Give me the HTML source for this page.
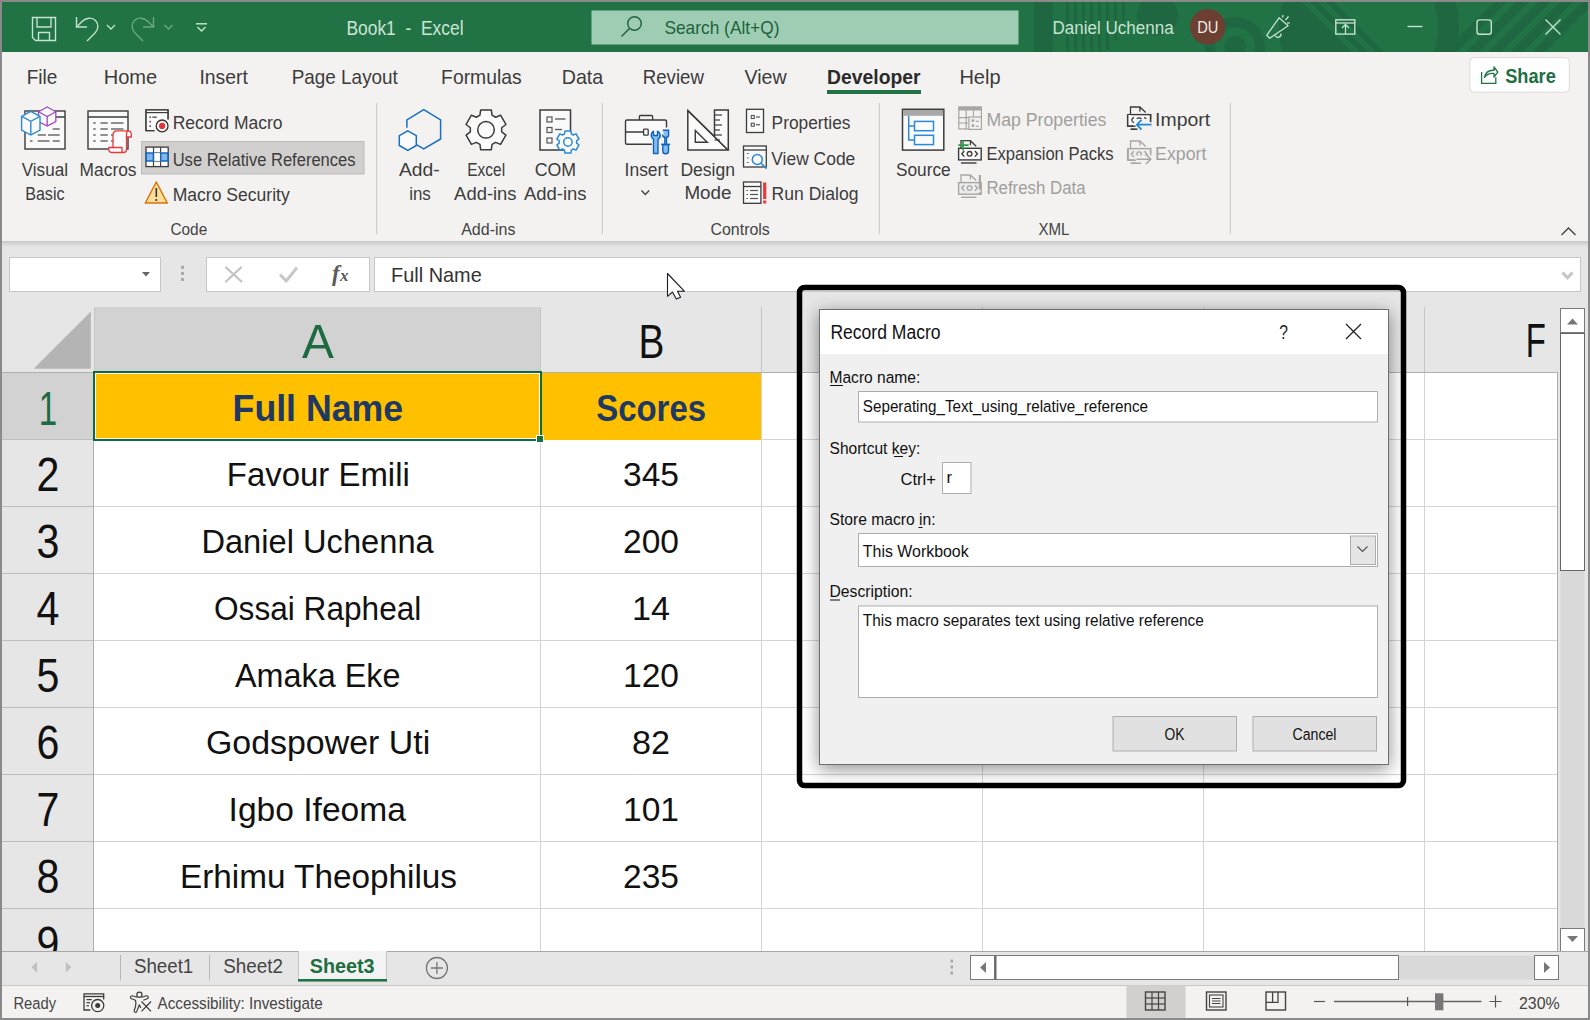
<!DOCTYPE html>
<html><head><meta charset="utf-8"><title>Excel</title>
<style>
html,body{margin:0;padding:0;width:1590px;height:1020px;overflow:hidden;background:#8a8a8a}
svg{position:absolute;left:0;top:0;display:block}
text{font-family:"Liberation Sans", sans-serif;white-space:pre}
</style></head><body>
<svg width="1590" height="1020" viewBox="0 0 1590 1020">
<defs>
<linearGradient id="ribsh" x1="0" y1="0" x2="0" y2="1"><stop offset="0" stop-color="#c8c8c8"/><stop offset="1" stop-color="#e6e6e6"/></linearGradient>
<filter id="dshadow" x="-10%" y="-10%" width="120%" height="125%"><feGaussianBlur in="SourceAlpha" stdDeviation="9"/><feOffset dx="0" dy="4"/><feComponentTransfer><feFuncA type="linear" slope="0.45"/></feComponentTransfer><feMerge><feMergeNode/><feMergeNode in="SourceGraphic"/></feMerge></filter>
<clipPath id="clipbox"><rect x="802" y="290" width="599" height="493"/></clipPath>
</defs>
<rect x="0" y="0" width="1590" height="1020" fill="#8a8a8a" /><rect x="2" y="2" width="1586" height="50.3" fill="#217346" /><clipPath id="tclip"><rect x="2" y="2" width="1586" height="50.3"/></clipPath><clipPath id="stripclip"><rect x="1300" y="2" width="200" height="51"/></clipPath><g clip-path="url(#tclip)" fill="#1f6740"><rect x="1034" y="2" width="18.7" height="51" fill="#1f6740" /><rect x="1066" y="2" width="3" height="51" fill="#1f6740" /><rect x="1074" y="2" width="3" height="51" fill="#1f6740" /><rect x="1082" y="2" width="3" height="51" fill="#1f6740" /><rect x="1090" y="2" width="3" height="51" fill="#1f6740" /><rect x="1098" y="2" width="3" height="51" fill="#1f6740" /><rect x="1106" y="2" width="3" height="47" fill="#1f6740" /><rect x="1114" y="2" width="3" height="38" fill="#1f6740" /><rect x="1122" y="2" width="3" height="19" fill="#1f6740" /><circle cx="1157.3" cy="15" r="20.6"/><circle cx="1235" cy="47" r="25" fill="none" stroke="#1f6740" stroke-width="10"/><circle cx="1235" cy="47" r="10.8"/><circle cx="1369" cy="27" r="79.5" fill="none" stroke="#1f6740" stroke-width="21"/><path d="M1290 2 L1334 2 L1385 53 L1290 53 Z"/><g clip-path="url(#stripclip)" fill="#217346"><path d="M1302 2 L1310 2 L1361 53 L1353 53 Z"/><path d="M1318 2 L1326 2 L1377 53 L1369 53 Z"/></g><path d="M1494 2 L1507 2 L1456 53 L1443 53 Z"/><path d="M1516 2 L1529 2 L1478 53 L1465 53 Z"/><path d="M1538 2 L1551 2 L1500 53 L1487 53 Z"/><path d="M1560 2 L1573 2 L1522 53 L1509 53 Z"/><path d="M1582 2 L1595 2 L1544 53 L1531 53 Z"/></g><path d="M32.5 17.5 H55.5 V40.5 H35.5 L32.5 37.5 Z" fill="none" stroke="#c3e2cf" stroke-width="1.4" /><path d="M37 17.5 V27 H51 V17.5" fill="none" stroke="#c3e2cf" stroke-width="1.4" /><path d="M38.5 40.5 V32.5 H49.5 V40.5" fill="none" stroke="#c3e2cf" stroke-width="1.4" /><path d="M76.5 17 V27 H87" fill="none" stroke="#c3e2cf" stroke-width="1.4" /><path d="M77 26.5 L82 21.5 C86 17.5 92 17 95.5 20.5 C99 24 98.5 29.5 95 33 L87 41" fill="none" stroke="#c3e2cf" stroke-width="1.4" /><path d="M107 25 L111 29 L115 25" fill="none" stroke="#c3e2cf" stroke-width="1.3" /><path d="M153.5 17 V27 H143" fill="none" stroke="#6aaa84" stroke-width="1.4" /><path d="M153 26.5 L148 21.5 C144 17.5 138 17 134.5 20.5 C131 24 131.5 29.5 135 33 L143 41" fill="none" stroke="#6aaa84" stroke-width="1.4" /><path d="M164.5 25 L168.5 29 L172.5 25" fill="none" stroke="#6aaa84" stroke-width="1.3" /><line x1="196" y1="23.8" x2="207" y2="23.8" stroke="#c3e2cf" stroke-width="1.5" /><path d="M197.5 27 L201.5 31 L205.5 27" fill="none" stroke="#c3e2cf" stroke-width="1.5" /><text x="346.4" y="34.7" font-size="20.3" fill="#cde4d6" font-weight="normal" textLength="117.2" lengthAdjust="spacingAndGlyphs">Book1  -  Excel</text><rect x="591.5" y="10.5" width="427" height="34" fill="#9fcdb3" /><circle cx="634.5" cy="23.5" r="6.8" fill="none" stroke="#23663f" stroke-width="1.5"/><line x1="629.5" y1="28.5" x2="621.5" y2="36.5" stroke="#23663f" stroke-width="1.6" /><text x="664.4" y="34.2" font-size="19.0" fill="#21633d" font-weight="normal" textLength="115.1" lengthAdjust="spacingAndGlyphs">Search (Alt+Q)</text><text x="1052.5" y="33.7" font-size="18.3" fill="#c8e2d2" font-weight="normal" textLength="121.1" lengthAdjust="spacingAndGlyphs">Daniel Uchenna</text><circle cx="1207.7" cy="26.8" r="17.8" fill="#6b4033"/><text x="1197.2" y="32.6" font-size="15.6" fill="#f3ebe6" font-weight="normal" textLength="21.2" lengthAdjust="spacingAndGlyphs">DU</text><path d="M1266.8 35.2 L1279.1 17.8 L1288.1 25.7 L1269.7 38.2 Z" fill="none" stroke="#c3e2cf" stroke-width="1.3" stroke-linejoin="round"/><path d="M1275 35.5 A3.2 3.2 0 0 0 1281 33.5" fill="none" stroke="#c3e2cf" stroke-width="1.3" /><line x1="1282.5" y1="17.5" x2="1283" y2="15" stroke="#c3e2cf" stroke-width="1.3" /><line x1="1285.5" y1="20" x2="1288.5" y2="16.5" stroke="#c3e2cf" stroke-width="1.3" /><line x1="1287" y1="23" x2="1289.8" y2="23" stroke="#c3e2cf" stroke-width="1.3" /><rect x="1335.8" y="19.8" width="19" height="14.3" fill="none" stroke="#c3e2cf" stroke-width="1.4" /><line x1="1336" y1="23" x2="1355" y2="23" stroke="#c3e2cf" stroke-width="1.3" /><path d="M1342 28 L1345.5 24.5 L1349 28 M1345.5 25 V34" fill="none" stroke="#c3e2cf" stroke-width="1.3" /><line x1="1407.5" y1="26.5" x2="1422.5" y2="26.5" stroke="#c3e2cf" stroke-width="1.4" /><rect x="1477" y="19.9" width="14.3" height="14.3" fill="none" stroke="#c3e2cf" stroke-width="1.4" rx="2.5" /><path d="M1545.5 19.5 L1560.5 34.5 M1560.5 19.5 L1545.5 34.5" fill="none" stroke="#c3e2cf" stroke-width="1.4" /><rect x="2" y="52" width="1586" height="190" fill="#f3f2f1" /><rect x="2" y="242" width="1586" height="709" fill="#e6e6e6" /><rect x="2" y="241" width="1586" height="6" fill="url(#ribsh)" /><text x="26.7" y="84.0" font-size="20.3" fill="#3c3c3c" font-weight="normal" textLength="30.6" lengthAdjust="spacingAndGlyphs">File</text><text x="103.7" y="84.0" font-size="20.3" fill="#3c3c3c" font-weight="normal" textLength="53.6" lengthAdjust="spacingAndGlyphs">Home</text><text x="199.4" y="84.0" font-size="20.3" fill="#3c3c3c" font-weight="normal" textLength="48.5" lengthAdjust="spacingAndGlyphs">Insert</text><text x="291.7" y="84.0" font-size="20.3" fill="#3c3c3c" font-weight="normal" textLength="106.2" lengthAdjust="spacingAndGlyphs">Page Layout</text><text x="441.1" y="84.0" font-size="20.3" fill="#3c3c3c" font-weight="normal" textLength="80.5" lengthAdjust="spacingAndGlyphs">Formulas</text><text x="561.7" y="84.0" font-size="20.3" fill="#3c3c3c" font-weight="normal" textLength="41.6" lengthAdjust="spacingAndGlyphs">Data</text><text x="642.7" y="84.0" font-size="20.3" fill="#3c3c3c" font-weight="normal" textLength="61.2" lengthAdjust="spacingAndGlyphs">Review</text><text x="744.4" y="84.0" font-size="20.3" fill="#3c3c3c" font-weight="normal" textLength="42.2" lengthAdjust="spacingAndGlyphs">View</text><text x="959.4" y="84.0" font-size="20.3" fill="#3c3c3c" font-weight="normal" textLength="41.2" lengthAdjust="spacingAndGlyphs">Help</text><text x="827.1" y="84.0" font-size="20.3" fill="#2b2b2b" font-weight="bold" textLength="93.5" lengthAdjust="spacingAndGlyphs">Developer</text><rect x="827" y="90" width="94" height="4" fill="#217346" /><rect x="1469.8" y="57.6" width="99.5" height="34.6" fill="#ffffff" stroke="#dcdad8" stroke-width="1" rx="4" /><text x="1505.2" y="82.8" font-size="21.1" fill="#1e6e42" font-weight="bold" textLength="50.6" lengthAdjust="spacingAndGlyphs">Share</text><path d="M1481.6 72 V83.3 H1495.8 V77.3" fill="none" stroke="#217346" stroke-width="1.3" /><path d="M1484.5 77.5 C1485.5 72 1489 70 1494 70.3 V67 L1497.8 72 L1494 77 V73.5 C1489.5 73 1486.5 74.5 1484.5 77.5 Z" fill="none" stroke="#217346" stroke-width="1.3" stroke-linejoin="round"/><line x1="376.7" y1="103" x2="376.7" y2="234" stroke="#c8c6c4" stroke-width="1" /><line x1="602.3" y1="103" x2="602.3" y2="234" stroke="#c8c6c4" stroke-width="1" /><line x1="879.3" y1="103" x2="879.3" y2="234" stroke="#c8c6c4" stroke-width="1" /><line x1="1230.3" y1="103" x2="1230.3" y2="234" stroke="#c8c6c4" stroke-width="1" /><text x="170.5" y="234.5" font-size="17.2" fill="#444" font-weight="normal" textLength="36.7" lengthAdjust="spacingAndGlyphs">Code</text><text x="461.2" y="234.5" font-size="17.2" fill="#444" font-weight="normal" textLength="54.3" lengthAdjust="spacingAndGlyphs">Add-ins</text><text x="710.5" y="234.5" font-size="17.2" fill="#444" font-weight="normal" textLength="59.3" lengthAdjust="spacingAndGlyphs">Controls</text><text x="1038.5" y="234.5" font-size="17.2" fill="#444" font-weight="normal" textLength="31.0" lengthAdjust="spacingAndGlyphs">XML</text><path d="M1561.5 235 L1568.5 228 L1575.5 235" fill="none" stroke="#444" stroke-width="1.4" /><text x="21.7" y="176.0" font-size="18.7" fill="#3c3c3c" font-weight="normal" textLength="46.3" lengthAdjust="spacingAndGlyphs">Visual</text><text x="25.2" y="199.7" font-size="18.7" fill="#3c3c3c" font-weight="normal" textLength="39.3" lengthAdjust="spacingAndGlyphs">Basic</text><text x="79.6" y="176.0" font-size="18.7" fill="#3c3c3c" font-weight="normal" textLength="56.9" lengthAdjust="spacingAndGlyphs">Macros</text><rect x="25" y="111" width="40" height="38" fill="#fafafa" stroke="#3b3b3b" stroke-width="1.4" /><line x1="25" y1="117" x2="65" y2="117" stroke="#3b3b3b" stroke-width="1.4" /><line x1="52.7" y1="129" x2="59.7" y2="129" stroke="#555" stroke-width="1.3" /><line x1="37.7" y1="135" x2="45.9" y2="135" stroke="#555" stroke-width="1.3" /><line x1="48" y1="135" x2="59.7" y2="135" stroke="#555" stroke-width="1.3" /><line x1="30" y1="141" x2="32.5" y2="141" stroke="#555" stroke-width="1.3" /><line x1="37.7" y1="141" x2="49.5" y2="141" stroke="#555" stroke-width="1.3" /><line x1="52.7" y1="141" x2="59.7" y2="141" stroke="#555" stroke-width="1.3" /><path d="M47.2 107 L55.8 111.8 V121.5 L47.2 126 L38.5 121.5 V111.8 Z" fill="#fafafa" stroke="#a546c4" stroke-width="1.3" /><path d="M38.5 111.8 L47.2 116.5 L55.8 111.8 M47.2 116.5 V126" fill="none" stroke="#a546c4" stroke-width="1.3" /><path d="M30.8 111.3 L40 116.3 V130 L30.8 135 L21.6 130 V116.3 Z" fill="#fafafa" stroke="#2a8ad8" stroke-width="1.4" /><path d="M21.6 116.3 L30.8 121.3 L40 116.3 M30.8 121.3 V135" fill="none" stroke="#2a8ad8" stroke-width="1.4" /><rect x="88" y="111" width="40" height="38" fill="#fafafa" stroke="#3b3b3b" stroke-width="1.4" /><line x1="88" y1="117" x2="128" y2="117" stroke="#3b3b3b" stroke-width="1.4" /><line x1="93.2" y1="123" x2="95.7" y2="123" stroke="#555" stroke-width="1.3" /><line x1="100.4" y1="123" x2="107.8" y2="123" stroke="#555" stroke-width="1.3" /><line x1="111" y1="123" x2="123.5" y2="123" stroke="#555" stroke-width="1.3" /><line x1="93.2" y1="129" x2="95.7" y2="129" stroke="#555" stroke-width="1.3" /><line x1="100.4" y1="129" x2="107.8" y2="129" stroke="#555" stroke-width="1.3" /><line x1="111" y1="129" x2="123.5" y2="129" stroke="#555" stroke-width="1.3" /><line x1="93.2" y1="135" x2="95.7" y2="135" stroke="#555" stroke-width="1.3" /><line x1="100.4" y1="135" x2="107.8" y2="135" stroke="#555" stroke-width="1.3" /><line x1="111" y1="135" x2="123.5" y2="135" stroke="#555" stroke-width="1.3" /><line x1="93.2" y1="141" x2="95.7" y2="141" stroke="#555" stroke-width="1.3" /><line x1="100.4" y1="141" x2="107.8" y2="141" stroke="#555" stroke-width="1.3" /><line x1="111" y1="141" x2="123.5" y2="141" stroke="#555" stroke-width="1.3" /><path d="M112.5 152.5 C110 152.5 108.8 151 108.8 149.5 V147.5 H113 V135 C113 132 114.5 130.8 117 130.8 H128 C130 130.8 131.3 132.5 131.3 134.5 V137 H126.5 V149.5 C126.5 151.5 125 152.5 123.5 152.5 Z" fill="#fafafa" stroke="#e63a3f" stroke-width="1.3" /><path d="M113 147.5 H122 V152.5 M126.5 137 V134 C126.5 132 127.5 130.8 128.5 130.8" fill="none" stroke="#e63a3f" stroke-width="1.3" /><path d="M168 119.4 V109.8 H146 V130.6 H154.5" fill="none" stroke="#3b3b3b" stroke-width="1.3" /><rect x="146.6" y="110.4" width="20.8" height="20" fill="#fafafa" /><path d="M168 119.4 V109.8 H146 V130.6 H154.5" fill="none" stroke="#3b3b3b" stroke-width="1.3" /><line x1="146" y1="112.6" x2="168" y2="112.6" stroke="#3b3b3b" stroke-width="1.2" /><rect x="149.4" y="116.4" width="1.6" height="1.6" fill="#555" /><rect x="149.4" y="120.8" width="1.6" height="1.6" fill="#555" /><rect x="149.4" y="125.3" width="1.6" height="1.6" fill="#555" /><line x1="152.4" y1="117.2" x2="156.8" y2="117.2" stroke="#555" stroke-width="1.4" /><circle cx="162.1" cy="125.9" r="5.9" fill="#fafafa" stroke="#333" stroke-width="1.3"/><circle cx="162.1" cy="125.9" r="3.1" fill="#e8303a"/><text x="172.7" y="129.3" font-size="18.7" fill="#3c3c3c" font-weight="normal" textLength="109.8" lengthAdjust="spacingAndGlyphs">Record Macro</text><rect x="141.5" y="141.5" width="222.5" height="32.5" fill="#d2d0ce" stroke="#bdbbb9" stroke-width="1" /><rect x="146" y="147.1" width="22.2" height="19.5" fill="#ffffff" stroke="#3b3b3b" stroke-width="1.3" /><line x1="153.5" y1="147" x2="153.5" y2="167" stroke="#444" stroke-width="1.2" /><line x1="160.6" y1="147" x2="160.6" y2="167" stroke="#444" stroke-width="1.2" /><line x1="153.5" y1="152.6" x2="160.6" y2="152.6" stroke="#777" stroke-width="1" /><line x1="153.5" y1="161.4" x2="160.6" y2="161.4" stroke="#777" stroke-width="1" /><rect x="146.2" y="153" width="7.2" height="8" fill="#80b6ea" stroke="#1565c0" stroke-width="1.5" /><rect x="160.7" y="153" width="7.2" height="8" fill="#80b6ea" stroke="#1565c0" stroke-width="1.5" /><text x="172.7" y="165.8" font-size="18.7" fill="#3c3c3c" font-weight="normal" textLength="182.8" lengthAdjust="spacingAndGlyphs">Use Relative References</text><path d="M156.3 182 L167.3 203 H145.3 Z" fill="#fbdf98" stroke="#d9730d" stroke-width="1.5" stroke-linejoin="round"/><line x1="156.3" y1="188" x2="156.3" y2="197" stroke="#333" stroke-width="1.6" /><line x1="156.3" y1="199" x2="156.3" y2="201" stroke="#333" stroke-width="1.6" /><text x="172.7" y="200.7" font-size="18.7" fill="#3c3c3c" font-weight="normal" textLength="117.1" lengthAdjust="spacingAndGlyphs">Macro Security</text><path d="M406.9 127.7 V119.8 L423.7 109.6 L440.6 119.8 V139 L423.7 148.9 L416.8 144.8" fill="none" stroke="#1a6fc4" stroke-width="1.5" /><path d="M407.8 130.8 L416.3 135.7 V145.5 L407.8 150.3 L399.3 145.5 V135.7 Z" fill="#fafafa" stroke="#1a6fc4" stroke-width="1.5" /><text x="398.9" y="176.0" font-size="18.7" fill="#3c3c3c" font-weight="normal" textLength="40.7" lengthAdjust="spacingAndGlyphs">Add-</text><text x="409.2" y="199.5" font-size="18.7" fill="#3c3c3c" font-weight="normal" textLength="21.6" lengthAdjust="spacingAndGlyphs">ins</text><path d="M480.67 109.90 L491.33 109.90 L492.05 115.20 L495.62 117.27 L500.57 115.23 L505.90 124.47 L501.66 127.74 L501.66 131.86 L505.90 135.13 L500.57 144.37 L495.62 142.33 L492.05 144.40 L491.33 149.70 L480.67 149.70 L479.95 144.40 L476.38 142.33 L471.43 144.37 L466.10 135.13 L470.34 131.86 L470.34 127.74 L466.10 124.47 L471.43 115.23 L476.38 117.27 L479.95 115.20 Z" fill="#fafafa" stroke="#3b3b3b" stroke-width="1.5" stroke-linejoin="round"/><circle cx="486" cy="129.8" r="8.3" fill="none" stroke="#3b3b3b" stroke-width="1.5"/><text x="467.3" y="176.0" font-size="18.7" fill="#3c3c3c" font-weight="normal" textLength="37.8" lengthAdjust="spacingAndGlyphs">Excel</text><text x="454.1" y="199.5" font-size="18.7" fill="#3c3c3c" font-weight="normal" textLength="62.5" lengthAdjust="spacingAndGlyphs">Add-ins</text><rect x="540" y="110" width="30.5" height="40" fill="#fafafa" stroke="#3b3b3b" stroke-width="1.5" /><rect x="547" y="117.0" width="5" height="5" fill="none" stroke="#555" stroke-width="1.2" /><rect x="547" y="127.5" width="5" height="5" fill="none" stroke="#555" stroke-width="1.2" /><rect x="547" y="138.0" width="5" height="5" fill="none" stroke="#555" stroke-width="1.2" /><line x1="555" y1="119" x2="565.5" y2="119" stroke="#555" stroke-width="1.3" /><line x1="555" y1="129.5" x2="562" y2="129.5" stroke="#555" stroke-width="1.3" /><path d="M564.92 130.89 L570.88 130.89 L571.27 133.87 L573.26 135.02 L576.03 133.87 L579.01 139.02 L576.62 140.85 L576.62 143.15 L579.01 144.98 L576.03 150.13 L573.26 148.98 L571.27 150.13 L570.88 153.11 L564.92 153.11 L564.53 150.13 L562.54 148.98 L559.77 150.13 L556.79 144.98 L559.18 143.15 L559.18 140.85 L556.79 139.02 L559.77 133.87 L562.54 135.02 L564.53 133.87 Z" fill="#fafafa" stroke="#2a8ad8" stroke-width="1.5" stroke-linejoin="round"/><circle cx="567.9" cy="142" r="4.2" fill="none" stroke="#2a8ad8" stroke-width="1.5"/><text x="534.7" y="176.0" font-size="18.7" fill="#3c3c3c" font-weight="normal" textLength="41.4" lengthAdjust="spacingAndGlyphs">COM</text><text x="523.9" y="199.5" font-size="18.7" fill="#3c3c3c" font-weight="normal" textLength="62.7" lengthAdjust="spacingAndGlyphs">Add-ins</text><path d="M651.9 144.3 H627 A1.5 1.5 0 0 1 625.5 142.8 V121.5 A1.5 1.5 0 0 1 627 120 H665 A1.5 1.5 0 0 1 666.5 121.5 V127.6" fill="#fafafa" stroke="#3b3b3b" stroke-width="1.4" /><path d="M639.4 120 V116.5 A1 1 0 0 1 640.4 115.5 H651.6 A1 1 0 0 1 652.6 116.5 V120" fill="none" stroke="#3b3b3b" stroke-width="1.3" /><path d="M625.5 131 A1.2 1.2 0 0 0 627 132 H643.5" fill="none" stroke="#3b3b3b" stroke-width="1.3" /><rect x="643.6" y="129.2" width="4.6" height="6" fill="#fafafa" stroke="#3b3b3b" stroke-width="1.3" rx="0.8" /><path d="M653.5 131.2 V135.5 H657.5 V131.2 C660.5 132.5 661.5 137 658 139.3 V153.5 H653.5 V139.3 C650 137 651 132.5 653.5 131.2 Z" fill="#86bdee" stroke="#0f63be" stroke-width="1.4" stroke-linejoin="round"/><path d="M662.8 130.3 H668.6 V135.5 C668.6 136.5 667.6 137.2 666.5 137.2 V144.3 M664.8 137.2 C663.7 137.2 662.8 136.5 662.8 135.5 Z M664.8 137.2 V144.3" fill="#86bdee" stroke="#0f63be" stroke-width="1.4" /><line x1="661" y1="144.3" x2="670.2" y2="144.3" stroke="#0f63be" stroke-width="1.4" /><path d="M662.8 144.8 V151 C662.8 152.8 664 153.8 665.6 153.8 C667.3 153.8 668.5 152.8 668.5 151 V144.8 Z" fill="#86bdee" stroke="#0f63be" stroke-width="1.4" /><text x="624.6" y="176.0" font-size="18.7" fill="#3c3c3c" font-weight="normal" textLength="43.6" lengthAdjust="spacingAndGlyphs">Insert</text><path d="M641.5 190.5 L645.3 194.5 L649.2 190.5" fill="none" stroke="#444" stroke-width="1.4" /><path d="M687.8 110.5 V150 H728 Z" fill="#fafafa" stroke="#3b3b3b" stroke-width="1.5" stroke-linejoin="miter"/><path d="M695.3 130.5 V142.3 H707.3 Z" fill="none" stroke="#3b3b3b" stroke-width="1.4" /><path d="M714.5 136.2 V110 H728.3 V150" fill="#fafafa" stroke="#3b3b3b" stroke-width="1.5" /><line x1="714.5" y1="115" x2="722" y2="115" stroke="#3b3b3b" stroke-width="1.2" /><line x1="714.5" y1="120" x2="720" y2="120" stroke="#3b3b3b" stroke-width="1.2" /><line x1="714.5" y1="125" x2="722" y2="125" stroke="#3b3b3b" stroke-width="1.2" /><line x1="714.5" y1="130" x2="720" y2="130" stroke="#3b3b3b" stroke-width="1.2" /><line x1="714.5" y1="135" x2="722" y2="135" stroke="#3b3b3b" stroke-width="1.2" /><line x1="714.5" y1="140" x2="720" y2="140" stroke="#3b3b3b" stroke-width="1.2" /><path d="M687.8 110.5 L728 150" fill="none" stroke="#3b3b3b" stroke-width="1.5" /><text x="680.4" y="176.0" font-size="18.7" fill="#3c3c3c" font-weight="normal" textLength="54.6" lengthAdjust="spacingAndGlyphs">Design</text><text x="684.4" y="199.4" font-size="18.7" fill="#3c3c3c" font-weight="normal" textLength="47.1" lengthAdjust="spacingAndGlyphs">Mode</text><rect x="746.5" y="109.3" width="17" height="23.2" fill="#fafafa" stroke="#3b3b3b" stroke-width="1.3" /><rect x="751.3" y="115.5" width="3" height="3" fill="none" stroke="#555" stroke-width="1.1" /><rect x="751.3" y="123.2" width="3" height="3" fill="none" stroke="#555" stroke-width="1.1" /><line x1="756" y1="117" x2="760" y2="117" stroke="#555" stroke-width="1.2" /><line x1="756" y1="124.7" x2="760" y2="124.7" stroke="#555" stroke-width="1.2" /><text x="771.6" y="129.1" font-size="18.7" fill="#3c3c3c" font-weight="normal" textLength="78.9" lengthAdjust="spacingAndGlyphs">Properties</text><rect x="743.5" y="146" width="22.8" height="21" fill="#fafafa" stroke="#3b3b3b" stroke-width="1.3" /><line x1="743.5" y1="150" x2="766.3" y2="150" stroke="#3b3b3b" stroke-width="1.3" /><line x1="747" y1="153.5" x2="748.5" y2="153.5" stroke="#555" stroke-width="1.2" /><line x1="747" y1="158" x2="748.5" y2="158" stroke="#555" stroke-width="1.2" /><line x1="747" y1="162.5" x2="748.5" y2="162.5" stroke="#555" stroke-width="1.2" /><circle cx="757.3" cy="159.5" r="5" fill="#fafafa" stroke="#2a8ad8" stroke-width="1.5"/><line x1="761" y1="163.2" x2="766.5" y2="168.6" stroke="#2a8ad8" stroke-width="1.6" /><text x="771.3" y="164.5" font-size="18.7" fill="#3c3c3c" font-weight="normal" textLength="84.0" lengthAdjust="spacingAndGlyphs">View Code</text><rect x="743.5" y="182" width="17.4" height="21.3" fill="#fafafa" stroke="#3b3b3b" stroke-width="1.3" /><line x1="743.5" y1="186.5" x2="760.9" y2="186.5" stroke="#3b3b3b" stroke-width="1.3" /><line x1="746.5" y1="190.5" x2="748" y2="190.5" stroke="#555" stroke-width="1.2" /><line x1="750" y1="190.5" x2="758" y2="190.5" stroke="#555" stroke-width="1.2" /><line x1="746.5" y1="194.5" x2="748" y2="194.5" stroke="#555" stroke-width="1.2" /><line x1="750" y1="194.5" x2="758" y2="194.5" stroke="#555" stroke-width="1.2" /><line x1="746.5" y1="198.5" x2="748" y2="198.5" stroke="#555" stroke-width="1.2" /><line x1="750" y1="198.5" x2="758" y2="198.5" stroke="#555" stroke-width="1.2" /><rect x="763.1" y="182.5" width="3.2" height="16.5" fill="#e63a3f" /><rect x="763.1" y="200.5" width="3.2" height="3" fill="#e63a3f" /><text x="771.6" y="199.8" font-size="18.7" fill="#3c3c3c" font-weight="normal" textLength="86.8" lengthAdjust="spacingAndGlyphs">Run Dialog</text><rect x="902.5" y="109.3" width="41.3" height="40.8" fill="#fafafa" stroke="#3b3b3b" stroke-width="1.5" /><rect x="903.2" y="110" width="40" height="5.8" fill="#a8a8a8" /><path d="M908.7 116 V140 H914.5 M908.7 126 H914.5" fill="none" stroke="#2a8ad8" stroke-width="1.5" /><rect x="914.5" y="121.4" width="19" height="9.3" fill="none" stroke="#2a8ad8" stroke-width="1.5" /><rect x="914.5" y="135.3" width="19" height="9.3" fill="none" stroke="#2a8ad8" stroke-width="1.5" /><text x="896.0" y="176.4" font-size="18.7" fill="#3c3c3c" font-weight="normal" textLength="54.7" lengthAdjust="spacingAndGlyphs">Source</text><rect x="958.8" y="106.9" width="22.6" height="22" fill="none" stroke="#a8a6a4" stroke-width="1.2" /><rect x="958.8" y="106.9" width="22.6" height="3.6" fill="#a8a6a4" /><line x1="966.2" y1="110" x2="966.2" y2="129.4" stroke="#a8a6a4" stroke-width="1.2" /><line x1="958.8" y1="117.6" x2="968" y2="117.6" stroke="#a8a6a4" stroke-width="1.1" /><line x1="958.8" y1="123" x2="968" y2="123" stroke="#a8a6a4" stroke-width="1.1" /><line x1="958.8" y1="117.6" x2="981.4" y2="117.6" stroke="#a8a6a4" stroke-width="1.1" /><line x1="973.5" y1="110" x2="973.5" y2="117" stroke="#a8a6a4" stroke-width="1.1" /><rect x="968.9" y="117" width="12.5" height="12.4" fill="#f3f2f1" stroke="#a8a6a4" stroke-width="1.2" /><rect x="971.6" y="119.3" width="2.6" height="2.6" fill="#a8a6a4" /><rect x="971.6" y="124.3" width="2.6" height="2.6" fill="#a8a6a4" /><line x1="975.8" y1="121.3" x2="978.8" y2="121.3" stroke="#a8a6a4" stroke-width="1.2" /><line x1="975.8" y1="126.3" x2="978.8" y2="126.3" stroke="#a8a6a4" stroke-width="1.2" /><text x="986.5" y="126.0" font-size="18.7" fill="#a19f9d" font-weight="normal" textLength="119.9" lengthAdjust="spacingAndGlyphs">Map Properties</text><text x="986.4" y="159.8" font-size="18.7" fill="#3c3c3c" font-weight="normal" textLength="127.2" lengthAdjust="spacingAndGlyphs">Expansion Packs</text><path d="M961 148.2 V140.7 H970.4 L976.2 146.2 M970.4 140.7 V145.2" fill="none" stroke="#3b3b3b" stroke-width="1.3" /><rect x="958.6" y="148.29999999999998" width="22.6" height="11.6" fill="#fafafa" stroke="#3b3b3b" stroke-width="1.4" /><line x1="961" y1="163.0" x2="976.5" y2="163.0" stroke="#3b3b3b" stroke-width="1.4" /><path d="M964.3 151.0 L961.8 153.79999999999998 L964.3 156.6 M974.9 151.0 L977.4 153.79999999999998 L974.9 156.6" fill="none" stroke="#3b3b3b" stroke-width="1.4" /><circle cx="969.6" cy="153.79999999999998" r="2.3" fill="none" stroke="#3b3b3b" stroke-width="1.3"/><path d="M963 140.2 V150.5 M958.2 145.2 H968.6" fill="none" stroke="#2e9e46" stroke-width="1.7" /><path d="M961 182.5 V175.0 H970.4 L976.2 180.5 M970.4 175.0 V179.5" fill="none" stroke="#a8a6a4" stroke-width="1.3" /><rect x="958.6" y="182.6" width="22.6" height="11.6" fill="#ececec" stroke="#a8a6a4" stroke-width="1.4" /><line x1="961" y1="197.3" x2="976.5" y2="197.3" stroke="#a8a6a4" stroke-width="1.4" /><path d="M964.3 185.3 L961.8 188.1 L964.3 190.9 M974.9 185.3 L977.4 188.1 L974.9 190.9" fill="none" stroke="#a8a6a4" stroke-width="1.4" /><circle cx="969.6" cy="188.1" r="2.3" fill="none" stroke="#a8a6a4" stroke-width="1.3"/><rect x="978.8" y="175" width="2.2" height="14.5" fill="#a8a6a4" /><rect x="978.8" y="192.5" width="2.2" height="2.4" fill="#a8a6a4" /><text x="986.4" y="193.8" font-size="18.7" fill="#a19f9d" font-weight="normal" textLength="99.2" lengthAdjust="spacingAndGlyphs">Refresh Data</text><path d="M1130.5 114.5 V107.0 H1139.9 L1145.7 112.5 M1139.9 107.0 V111.5" fill="none" stroke="#3b3b3b" stroke-width="1.3" /><rect x="1128.1" y="114.6" width="22.6" height="11.6" fill="#fafafa" stroke="#3b3b3b" stroke-width="1.4" /><line x1="1130.5" y1="129.3" x2="1146.0" y2="129.3" stroke="#3b3b3b" stroke-width="1.4" /><path d="M1133.8 117.3 L1131.3 120.1 L1133.8 122.9 M1144.4 117.3 L1146.9 120.1 L1144.4 122.9" fill="none" stroke="#3b3b3b" stroke-width="1.4" /><circle cx="1139.1" cy="120.1" r="2.3" fill="none" stroke="#3b3b3b" stroke-width="1.3"/><rect x="1135.5" y="119" width="16" height="11" fill="#f3f2f1" /><rect x="1128.2" y="115" width="3" height="11" fill="#fafafa" /><path d="M1150.5 114.5 V122 M1127.6 114.5 V126 H1133 M1131 129.3 H1137.5" fill="none" stroke="#3b3b3b" stroke-width="1.4" /><path d="M1151 124.7 H1137 M1141.5 119.8 L1136.8 124.7 L1141.5 129.6" fill="none" stroke="#1e88d8" stroke-width="1.7" /><text x="1155.1" y="126.0" font-size="18.7" fill="#3c3c3c" font-weight="normal" textLength="55.0" lengthAdjust="spacingAndGlyphs">Import</text><path d="M1130.5 148.5 V141.0 H1139.9 L1145.7 146.5 M1139.9 141.0 V145.5" fill="none" stroke="#a8a6a4" stroke-width="1.3" /><rect x="1128.1" y="148.6" width="22.6" height="11.6" fill="#ececec" stroke="#a8a6a4" stroke-width="1.4" /><line x1="1130.5" y1="163.3" x2="1146.0" y2="163.3" stroke="#a8a6a4" stroke-width="1.4" /><path d="M1133.8 151.3 L1131.3 154.1 L1133.8 156.9 M1144.4 151.3 L1146.9 154.1 L1144.4 156.9" fill="none" stroke="#a8a6a4" stroke-width="1.4" /><circle cx="1139.1" cy="154.1" r="2.3" fill="none" stroke="#a8a6a4" stroke-width="1.3"/><rect x="1136" y="155.5" width="16" height="9" fill="#f3f2f1" /><path d="M1150.5 148.5 V153 M1127.6 148.5 V160 H1134 M1131 163.2 H1141" fill="none" stroke="#a8a6a4" stroke-width="1.4" /><path d="M1136.5 159.2 H1150.5 M1146 154.3 L1150.7 159.2 L1146 164" fill="none" stroke="#a8a6a4" stroke-width="1.6" /><text x="1155.1" y="159.8" font-size="18.7" fill="#a19f9d" font-weight="normal" textLength="51.3" lengthAdjust="spacingAndGlyphs">Export</text><rect x="9.5" y="257.5" width="151" height="34" fill="#ffffff" stroke="#c6c6c6" stroke-width="1" /><path d="M142 272 L146 276.5 L150 272 Z" fill="#666" /><rect x="181" y="265.8" width="3" height="3" fill="#a8a8a8" /><rect x="181" y="271.9" width="3" height="3" fill="#a8a8a8" /><rect x="181" y="277.9" width="3" height="3" fill="#a8a8a8" /><rect x="206.5" y="257.5" width="163" height="34" fill="#ffffff" stroke="#c6c6c6" stroke-width="1" /><path d="M226 267.5 L241.5 281.5 M241 267.5 L226 281.5" fill="none" stroke="#c2c2c2" stroke-width="2.2" stroke-linecap="round"/><path d="M280 274.5 L286.2 281 L297 267.5" fill="none" stroke="#c8c8c8" stroke-width="3" stroke-linejoin="round"/><text x="332" y="280.5" style="font-family:'Liberation Serif',serif" font-style="italic" font-weight="bold" font-size="23" fill="#5a5a5a">f</text><text x="340" y="280.5" style="font-family:'Liberation Serif',serif" font-style="italic" font-weight="bold" font-size="17" fill="#5a5a5a">x</text><rect x="374.5" y="257.5" width="1206" height="34" fill="#ffffff" stroke="#c6c6c6" stroke-width="1" /><text x="391.1" y="282.4" font-size="20.7" fill="#333" font-weight="normal" textLength="90.6" lengthAdjust="spacingAndGlyphs">Full Name</text><path d="M1562.5 272.5 L1567.5 277.8 L1572.5 272.5" fill="none" stroke="#c4c4c4" stroke-width="3" /><rect x="2" y="307" width="1556" height="65" fill="#e6e6e6" /><rect x="94" y="307" width="446" height="65" fill="#d2d2d2" /><path d="M90.8 311.5 V368.8 H33.5 Z" fill="#b4b4b4" /><rect x="94" y="307" width="1" height="65" fill="#c6c6c6" /><rect x="540" y="307" width="1" height="65" fill="#c6c6c6" /><rect x="761" y="307" width="1" height="65" fill="#c6c6c6" /><rect x="982" y="307" width="1" height="65" fill="#c6c6c6" /><rect x="1203" y="307" width="1" height="65" fill="#c6c6c6" /><rect x="1424" y="307" width="1" height="65" fill="#c6c6c6" /><rect x="2" y="372" width="1556" height="1" fill="#b0b0b0" /><rect x="2" y="373" width="91" height="578" fill="#e6e6e6" /><rect x="2" y="373" width="91" height="66" fill="#d2d2d2" /><rect x="93" y="373" width="1" height="578" fill="#b0b0b0" /><rect x="94" y="373" width="1464" height="578" fill="#ffffff" /><rect x="2" y="439" width="91" height="1" fill="#bdbdbd" /><rect x="94" y="439" width="1464" height="1" fill="#d4d4d4" /><rect x="2" y="506" width="91" height="1" fill="#bdbdbd" /><rect x="94" y="506" width="1464" height="1" fill="#d4d4d4" /><rect x="2" y="573" width="91" height="1" fill="#bdbdbd" /><rect x="94" y="573" width="1464" height="1" fill="#d4d4d4" /><rect x="2" y="640" width="91" height="1" fill="#bdbdbd" /><rect x="94" y="640" width="1464" height="1" fill="#d4d4d4" /><rect x="2" y="707" width="91" height="1" fill="#bdbdbd" /><rect x="94" y="707" width="1464" height="1" fill="#d4d4d4" /><rect x="2" y="774" width="91" height="1" fill="#bdbdbd" /><rect x="94" y="774" width="1464" height="1" fill="#d4d4d4" /><rect x="2" y="841" width="91" height="1" fill="#bdbdbd" /><rect x="94" y="841" width="1464" height="1" fill="#d4d4d4" /><rect x="2" y="908" width="91" height="1" fill="#bdbdbd" /><rect x="94" y="908" width="1464" height="1" fill="#d4d4d4" /><rect x="540" y="373" width="1" height="578" fill="#d4d4d4" /><rect x="761" y="373" width="1" height="578" fill="#d4d4d4" /><rect x="982" y="373" width="1" height="578" fill="#d4d4d4" /><rect x="1203" y="373" width="1" height="578" fill="#d4d4d4" /><rect x="1424" y="373" width="1" height="578" fill="#d4d4d4" /><rect x="1557" y="372" width="1" height="579" fill="#ababab" /><rect x="94" y="373" width="667" height="67" fill="#ffc000" /><rect x="94" y="372" width="447" height="68" fill="none" stroke="#0f6b3a" stroke-width="2" /><rect x="95.5" y="373.5" width="444" height="65" fill="none" stroke="#ffffff" stroke-width="1" /><rect x="536" y="435" width="8" height="8" fill="#ffffff" /><rect x="537" y="436" width="6" height="6" fill="#1a6e40" /><text x="302.1" y="357.5" font-size="48.8" fill="#1e6b41" font-weight="normal" textLength="31.9" lengthAdjust="spacingAndGlyphs">A</text><text x="638.5" y="357.5" font-size="48.8" fill="#111" font-weight="normal" textLength="25.9" lengthAdjust="spacingAndGlyphs">B</text><text x="1525.8" y="357.1" font-size="48.8" fill="#111" font-weight="normal" textLength="20.1" lengthAdjust="spacingAndGlyphs">F</text><text x="38.8" y="424.9" font-size="48.8" fill="#1e6b41" font-weight="normal" textLength="18.4" lengthAdjust="spacingAndGlyphs">1</text><text x="36.5" y="491.3" font-size="48.8" fill="#111" font-weight="normal" textLength="22.9" lengthAdjust="spacingAndGlyphs">2</text><text x="36.5" y="558.3" font-size="48.8" fill="#111" font-weight="normal" textLength="22.9" lengthAdjust="spacingAndGlyphs">3</text><text x="36.5" y="625.3" font-size="48.8" fill="#111" font-weight="normal" textLength="22.9" lengthAdjust="spacingAndGlyphs">4</text><text x="36.5" y="692.3" font-size="48.8" fill="#111" font-weight="normal" textLength="22.9" lengthAdjust="spacingAndGlyphs">5</text><text x="36.5" y="759.3" font-size="48.8" fill="#111" font-weight="normal" textLength="22.9" lengthAdjust="spacingAndGlyphs">6</text><text x="36.5" y="826.3" font-size="48.8" fill="#111" font-weight="normal" textLength="22.9" lengthAdjust="spacingAndGlyphs">7</text><text x="36.5" y="893.3" font-size="48.8" fill="#111" font-weight="normal" textLength="22.9" lengthAdjust="spacingAndGlyphs">8</text><text x="36.5" y="960.3" font-size="48.8" fill="#111" font-weight="normal" textLength="22.9" lengthAdjust="spacingAndGlyphs">9</text><text x="232.6" y="421.2" font-size="37.5" fill="#203864" font-weight="bold" textLength="170.6" lengthAdjust="spacingAndGlyphs">Full Name</text><text x="596.2" y="420.8" font-size="37.5" fill="#203864" font-weight="bold" textLength="109.9" lengthAdjust="spacingAndGlyphs">Scores</text><text x="226.8" y="485.9" font-size="32.8" fill="#111" font-weight="normal" textLength="183.0" lengthAdjust="spacingAndGlyphs">Favour Emili</text><text x="623.0" y="485.9" font-size="32.8" fill="#111" font-weight="normal" textLength="56.0" lengthAdjust="spacingAndGlyphs">345</text><text x="201.4" y="552.9" font-size="32.8" fill="#111" font-weight="normal" textLength="232.3" lengthAdjust="spacingAndGlyphs">Daniel Uchenna</text><text x="623.0" y="552.9" font-size="32.8" fill="#111" font-weight="normal" textLength="56.0" lengthAdjust="spacingAndGlyphs">200</text><text x="214.0" y="619.9" font-size="32.8" fill="#111" font-weight="normal" textLength="207.4" lengthAdjust="spacingAndGlyphs">Ossai Rapheal</text><text x="632.0" y="619.9" font-size="32.8" fill="#111" font-weight="normal" textLength="38.0" lengthAdjust="spacingAndGlyphs">14</text><text x="235.0" y="686.9" font-size="32.8" fill="#111" font-weight="normal" textLength="165.4" lengthAdjust="spacingAndGlyphs">Amaka Eke</text><text x="623.0" y="686.9" font-size="32.8" fill="#111" font-weight="normal" textLength="56.0" lengthAdjust="spacingAndGlyphs">120</text><text x="205.9" y="753.9" font-size="32.8" fill="#111" font-weight="normal" textLength="224.3" lengthAdjust="spacingAndGlyphs">Godspower Uti</text><text x="632.0" y="753.9" font-size="32.8" fill="#111" font-weight="normal" textLength="38.0" lengthAdjust="spacingAndGlyphs">82</text><text x="228.6" y="820.9" font-size="32.8" fill="#111" font-weight="normal" textLength="177.3" lengthAdjust="spacingAndGlyphs">Igbo Ifeoma</text><text x="623.0" y="820.9" font-size="32.8" fill="#111" font-weight="normal" textLength="56.0" lengthAdjust="spacingAndGlyphs">101</text><text x="180.0" y="887.9" font-size="32.8" fill="#111" font-weight="normal" textLength="277.0" lengthAdjust="spacingAndGlyphs">Erhimu Theophilus</text><text x="623.0" y="887.9" font-size="32.8" fill="#111" font-weight="normal" textLength="56.0" lengthAdjust="spacingAndGlyphs">235</text><rect x="1558" y="307" width="30" height="644" fill="#e6e6e6" /><rect x="1560.5" y="333" width="24" height="595" fill="#d9d9d9" /><rect x="1560.5" y="308.5" width="24" height="24" fill="#ffffff" stroke="#7a7a7a" stroke-width="1" /><path d="M1567 324.5 L1572.5 318.5 L1578 324.5 Z" fill="#777" /><rect x="1560.5" y="333.5" width="24" height="237" fill="#ffffff" stroke="#666" stroke-width="1" /><rect x="1560.5" y="928.5" width="24" height="23.5" fill="#ffffff" stroke="#7a7a7a" stroke-width="1" /><path d="M1567 936 L1572.5 942 L1578 936 Z" fill="#777" /><path d="M667.5 273.5 V296.3 L672.5 292 L676.3 299 L680.6 297.2 L677.5 291.3 H684.5 Z" fill="#fff" stroke="#1a1a22" stroke-width="1.1" stroke-linejoin="round"/><rect x="799.5" y="287.5" width="604" height="498" fill="none" stroke="#000" stroke-width="5.5" rx="5" /><g clip-path="url(#clipbox)"><g filter="url(#dshadow)"><rect x="819.5" y="309.5" width="569" height="455" fill="#f0f0f0" stroke="#6e6e6e" stroke-width="1" /></g></g><rect x="820" y="310" width="568" height="44" fill="#ffffff" /><text x="830.4" y="339.3" font-size="19.5" fill="#111" font-weight="normal" textLength="110.2" lengthAdjust="spacingAndGlyphs">Record Macro</text><text x="1279.2" y="339.0" font-size="19.8" fill="#222" font-weight="normal" textLength="8.7" lengthAdjust="spacingAndGlyphs">?</text><path d="M1346 324 L1361 339 M1361 324 L1346 339" fill="none" stroke="#222" stroke-width="1.3" /><text x="829.5" y="382.5" font-size="16.8" fill="#111" font-weight="normal" textLength="90.8" lengthAdjust="spacingAndGlyphs">Macro name:</text><line x1="830" y1="385.5" x2="843" y2="385.5" stroke="#111" stroke-width="1" /><rect x="858.5" y="391.5" width="519" height="30.5" fill="#ffffff" stroke="#adadad" stroke-width="1" /><text x="862.8" y="411.8" font-size="16.8" fill="#111" font-weight="normal" textLength="285.2" lengthAdjust="spacingAndGlyphs">Seperating_Text_using_relative_reference</text><text x="829.5" y="453.5" font-size="16.8" fill="#111" font-weight="normal" textLength="90.8" lengthAdjust="spacingAndGlyphs">Shortcut key:</text><line x1="894" y1="456.5" x2="903" y2="456.5" stroke="#111" stroke-width="1" /><text x="900.5" y="484.7" font-size="16.8" fill="#111" font-weight="normal" textLength="35.4" lengthAdjust="spacingAndGlyphs">Ctrl+</text><rect x="942.5" y="462.5" width="28.5" height="31" fill="#ffffff" stroke="#adadad" stroke-width="1" /><text x="946.6" y="482.6" font-size="16.8" fill="#111">r</text><text x="829.5" y="524.8" font-size="16.8" fill="#111" font-weight="normal" textLength="106.0" lengthAdjust="spacingAndGlyphs">Store macro in:</text><line x1="918.5" y1="527.5" x2="922.5" y2="527.5" stroke="#111" stroke-width="1" /><rect x="858.5" y="533.5" width="519" height="33" fill="#ffffff" stroke="#adadad" stroke-width="1" /><rect x="1350.5" y="536" width="25" height="28.5" fill="#e5e5e5" stroke="#adadad" stroke-width="1" /><path d="M1357.5 546.5 L1362.5 551.5 L1367.5 546.5" fill="none" stroke="#555" stroke-width="1.2" /><text x="862.8" y="556.5" font-size="16.8" fill="#111" font-weight="normal" textLength="105.9" lengthAdjust="spacingAndGlyphs">This Workbook</text><text x="829.5" y="597.0" font-size="16.8" fill="#111" font-weight="normal" textLength="83.0" lengthAdjust="spacingAndGlyphs">Description:</text><line x1="830" y1="600" x2="840" y2="600" stroke="#111" stroke-width="1" /><rect x="858.5" y="606" width="519" height="91.5" fill="#ffffff" stroke="#adadad" stroke-width="1" /><text x="862.8" y="626.4" font-size="16.8" fill="#111" font-weight="normal" textLength="341.0" lengthAdjust="spacingAndGlyphs">This macro separates text using relative reference</text><rect x="1113" y="716.5" width="123.5" height="34.5" fill="#e1e1e1" stroke="#adadad" stroke-width="1" /><text x="1164.5" y="740.0" font-size="16.8" fill="#111" font-weight="normal" textLength="20.0" lengthAdjust="spacingAndGlyphs">OK</text><rect x="1253" y="716.5" width="123.5" height="34.5" fill="#e1e1e1" stroke="#adadad" stroke-width="1" /><text x="1292.5" y="740.0" font-size="16.8" fill="#111" font-weight="normal" textLength="44.0" lengthAdjust="spacingAndGlyphs">Cancel</text><rect x="2" y="951" width="1586" height="34.5" fill="#e6e6e6" /><line x1="2" y1="951.5" x2="1588" y2="951.5" stroke="#a8a8a8" stroke-width="1" /><path d="M37 962 L31.5 967.3 L37 972.5 Z" fill="#c0c0c0" /><path d="M65.8 962 L71.3 967.3 L65.8 972.5 Z" fill="#c0c0c0" /><line x1="120.5" y1="955" x2="120.5" y2="980.5" stroke="#b8b8b8" stroke-width="1" /><line x1="209.5" y1="955" x2="209.5" y2="980.5" stroke="#b8b8b8" stroke-width="1" /><text x="133.9" y="973.0" font-size="20.5" fill="#444" font-weight="normal" textLength="59.4" lengthAdjust="spacingAndGlyphs">Sheet1</text><text x="223.2" y="973.0" font-size="20.5" fill="#444" font-weight="normal" textLength="59.7" lengthAdjust="spacingAndGlyphs">Sheet2</text><rect x="298.5" y="951" width="88" height="31" fill="#f3f3f3" /><line x1="298.5" y1="951" x2="298.5" y2="981" stroke="#c6c6c6" stroke-width="1" /><line x1="386.5" y1="951" x2="386.5" y2="981" stroke="#c6c6c6" stroke-width="1" /><rect x="298" y="979" width="89" height="2.6" fill="#217346" /><text x="309.8" y="973.0" font-size="20.5" fill="#1e6e42" font-weight="bold" textLength="64.7" lengthAdjust="spacingAndGlyphs">Sheet3</text><circle cx="436.9" cy="968" r="10.5" fill="none" stroke="#777" stroke-width="1.3"/><path d="M436.9 962 V974 M430.9 968 H442.9" fill="none" stroke="#777" stroke-width="1.3" /><rect x="950.5" y="959.5" width="2.5" height="3" fill="#a8a8a8" /><rect x="950.5" y="965.5" width="2.5" height="3" fill="#a8a8a8" /><rect x="950.5" y="971.5" width="2.5" height="3" fill="#a8a8a8" /><rect x="970.5" y="955.5" width="588" height="24" fill="#d9d9d9" /><rect x="970.5" y="955.5" width="24" height="24" fill="#ffffff" stroke="#7a7a7a" stroke-width="1" /><path d="M986 962 L980 967.5 L986 973 Z" fill="#777" /><rect x="995" y="955.5" width="403.5" height="24" fill="#ffffff" stroke="#7a7a7a" stroke-width="1" /><line x1="995.5" y1="955.5" x2="995.5" y2="979.5" stroke="#6a6a6a" stroke-width="2" /><rect x="1534.5" y="955.5" width="24" height="24" fill="#ffffff" stroke="#7a7a7a" stroke-width="1" /><path d="M1544 962 L1550 967.5 L1544 973 Z" fill="#777" /><rect x="2" y="985.5" width="1586" height="32.5" fill="#f3f2f1" /><line x1="2" y1="985.5" x2="1588" y2="985.5" stroke="#c8c8c8" stroke-width="1" /><text x="13.4" y="1008.8" font-size="17.2" fill="#444" font-weight="normal" textLength="42.7" lengthAdjust="spacingAndGlyphs">Ready</text><path d="M90.3 1010 H84 V993.8 H103.7 V999.6" fill="none" stroke="#3c3c3c" stroke-width="1.3" /><line x1="84" y1="996.5" x2="103.7" y2="996.5" stroke="#3c3c3c" stroke-width="1.3" /><line x1="86.5" y1="999.6" x2="91.8" y2="999.6" stroke="#3c3c3c" stroke-width="1.2" /><line x1="86.5" y1="1002.7" x2="90" y2="1002.7" stroke="#3c3c3c" stroke-width="1.2" /><line x1="86.5" y1="1005.8" x2="89" y2="1005.8" stroke="#3c3c3c" stroke-width="1.2" /><circle cx="97.7" cy="1005.6" r="6.1" fill="#f3f2f1" stroke="#3c3c3c" stroke-width="1.3"/><circle cx="97.7" cy="1005.6" r="2.5" fill="#3c3c3c"/><circle cx="139.4" cy="994.8" r="2.6" fill="none" stroke="#3c3c3c" stroke-width="1.2"/><path d="M137 997.2 L132.5 995.8 C130.5 995.5 129.5 998 131.6 998.8 L135.5 1000.3 C136.3 1002.5 136 1004 135.5 1006.5 L134.2 1010.5 C133.8 1012.3 136 1013 136.8 1011.4 L139.3 1004.8 L140.8 1008" fill="none" stroke="#3c3c3c" stroke-width="1.2" stroke-linejoin="round"/><path d="M141.8 997.2 L146.3 995.8 C148.3 995.5 149.3 998 147.2 998.8 L143.3 1000.3" fill="none" stroke="#3c3c3c" stroke-width="1.2" stroke-linejoin="round"/><path d="M141.5 1001.5 L151 1011.3 M151 1001.5 L141.5 1011.3" fill="none" stroke="#3c3c3c" stroke-width="1.2" /><text x="157.6" y="1008.8" font-size="17.2" fill="#444" font-weight="normal" textLength="165.1" lengthAdjust="spacingAndGlyphs">Accessibility: Investigate</text><rect x="1126.5" y="985.5" width="59" height="32.5" fill="#d2d0ce" /><rect x="1145.5" y="992" width="19.5" height="18" fill="none" stroke="#444" stroke-width="1.4" /><line x1="1152" y1="992" x2="1152" y2="1010" stroke="#444" stroke-width="1.2" /><line x1="1158.5" y1="992" x2="1158.5" y2="1010" stroke="#444" stroke-width="1.2" /><line x1="1145.5" y1="998" x2="1165" y2="998" stroke="#444" stroke-width="1.2" /><line x1="1145.5" y1="1004" x2="1165" y2="1004" stroke="#444" stroke-width="1.2" /><rect x="1206.5" y="992" width="19.5" height="18" fill="none" stroke="#444" stroke-width="1.4" /><rect x="1209.5" y="995" width="13.5" height="12" fill="none" stroke="#444" stroke-width="1.1" /><line x1="1212" y1="998.5" x2="1220.5" y2="998.5" stroke="#444" stroke-width="1" /><line x1="1212" y1="1001" x2="1220.5" y2="1001" stroke="#444" stroke-width="1" /><line x1="1212" y1="1003.5" x2="1220.5" y2="1003.5" stroke="#444" stroke-width="1" /><rect x="1266" y="992" width="19.5" height="18" fill="none" stroke="#444" stroke-width="1.4" /><path d="M1266 1002.4 H1278 V992 M1272.6 992 V1002.4" fill="none" stroke="#444" stroke-width="1.3" /><line x1="1314" y1="1001.5" x2="1325" y2="1001.5" stroke="#555" stroke-width="1.2" /><line x1="1334" y1="1001.5" x2="1481.5" y2="1001.5" stroke="#666" stroke-width="1.3" /><line x1="1407.6" y1="997" x2="1407.6" y2="1006" stroke="#555" stroke-width="1.2" /><rect x="1435" y="993.3" width="8.4" height="17" fill="#777" /><path d="M1489.5 1001.5 H1501.5 M1495.5 995.5 V1007.5" fill="none" stroke="#555" stroke-width="1.2" /><text x="1518.9" y="1008.8" font-size="17.2" fill="#444" font-weight="normal" textLength="40.8" lengthAdjust="spacingAndGlyphs">230%</text>
</svg>
</body></html>
